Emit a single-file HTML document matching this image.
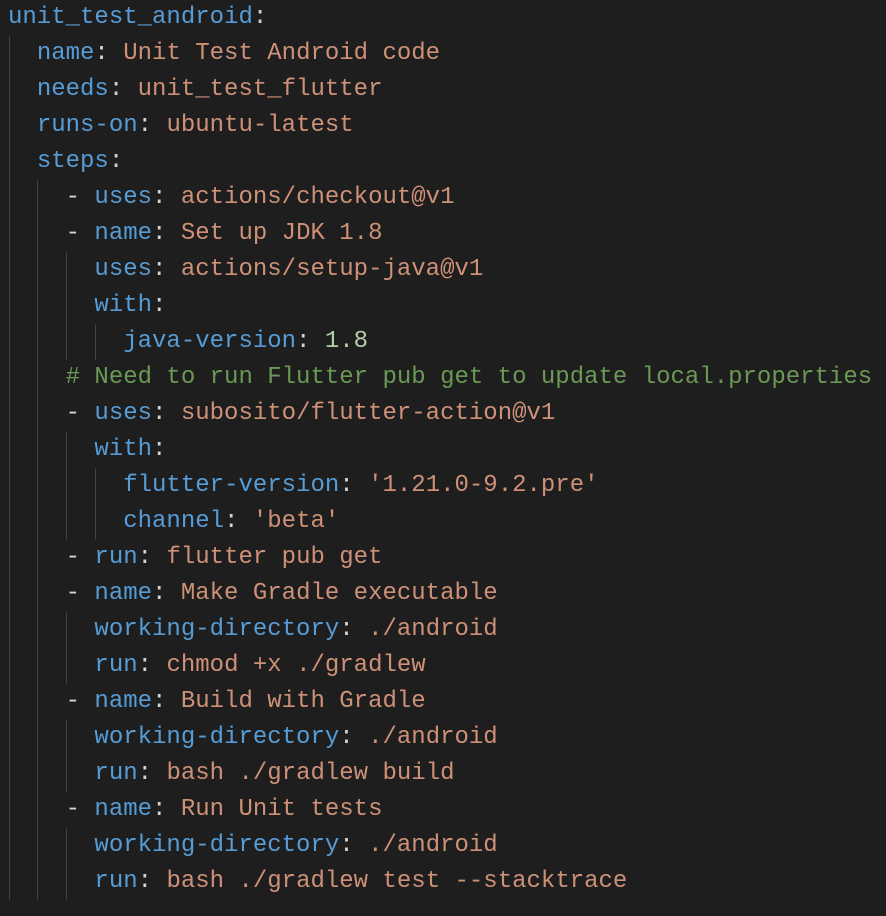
<!DOCTYPE html>
<html><head><meta charset="utf-8"><style>
html,body{margin:0;padding:0;background:#1e1e1e;width:886px;height:916px;overflow:hidden}
#c{position:relative;width:886px;height:916px}
.l{position:absolute;left:8px;height:36px;line-height:36px;font-family:"Liberation Mono",monospace;font-size:24px;white-space:pre;color:#d4d4d4}
.k{color:#569cd6}.s{color:#ce9178}.n{color:#b5cea8}.c{color:#6a9955}
.g{position:absolute;width:1px;background:#444}
</style></head><body><div id="c">
<div class="g" style="left:9px;top:36px;height:864px"></div>
<div class="g" style="left:37px;top:180px;height:720px"></div>
<div class="g" style="left:66px;top:252px;height:108px"></div>
<div class="g" style="left:95px;top:324px;height:36px"></div>
<div class="g" style="left:66px;top:432px;height:108px"></div>
<div class="g" style="left:95px;top:468px;height:72px"></div>
<div class="g" style="left:66px;top:612px;height:72px"></div>
<div class="g" style="left:66px;top:720px;height:72px"></div>
<div class="g" style="left:66px;top:828px;height:72px"></div>
<div class="l" style="top:0"><span class="k">unit_test_android</span>:</div>
<div class="l" style="top:36px">  <span class="k">name</span>: <span class="s">Unit Test Android code</span></div>
<div class="l" style="top:72px">  <span class="k">needs</span>: <span class="s">unit_test_flutter</span></div>
<div class="l" style="top:108px">  <span class="k">runs-on</span>: <span class="s">ubuntu-latest</span></div>
<div class="l" style="top:144px">  <span class="k">steps</span>:</div>
<div class="l" style="top:180px">    - <span class="k">uses</span>: <span class="s">actions/checkout@v1</span></div>
<div class="l" style="top:216px">    - <span class="k">name</span>: <span class="s">Set up JDK 1.8</span></div>
<div class="l" style="top:252px">      <span class="k">uses</span>: <span class="s">actions/setup-java@v1</span></div>
<div class="l" style="top:288px">      <span class="k">with</span>:</div>
<div class="l" style="top:324px">        <span class="k">java-version</span>: <span class="n">1.8</span></div>
<div class="l" style="top:360px">    <span class="c"># Need to run Flutter pub get to update local.properties</span></div>
<div class="l" style="top:396px">    - <span class="k">uses</span>: <span class="s">subosito/flutter-action@v1</span></div>
<div class="l" style="top:432px">      <span class="k">with</span>:</div>
<div class="l" style="top:468px">        <span class="k">flutter-version</span>: <span class="s">'1.21.0-9.2.pre'</span></div>
<div class="l" style="top:504px">        <span class="k">channel</span>: <span class="s">'beta'</span></div>
<div class="l" style="top:540px">    - <span class="k">run</span>: <span class="s">flutter pub get</span></div>
<div class="l" style="top:576px">    - <span class="k">name</span>: <span class="s">Make Gradle executable</span></div>
<div class="l" style="top:612px">      <span class="k">working-directory</span>: <span class="s">./android</span></div>
<div class="l" style="top:648px">      <span class="k">run</span>: <span class="s">chmod +x ./gradlew</span></div>
<div class="l" style="top:684px">    - <span class="k">name</span>: <span class="s">Build with Gradle</span></div>
<div class="l" style="top:720px">      <span class="k">working-directory</span>: <span class="s">./android</span></div>
<div class="l" style="top:756px">      <span class="k">run</span>: <span class="s">bash ./gradlew build</span></div>
<div class="l" style="top:792px">    - <span class="k">name</span>: <span class="s">Run Unit tests</span></div>
<div class="l" style="top:828px">      <span class="k">working-directory</span>: <span class="s">./android</span></div>
<div class="l" style="top:864px">      <span class="k">run</span>: <span class="s">bash ./gradlew test --stacktrace</span></div>
</div></body></html>
